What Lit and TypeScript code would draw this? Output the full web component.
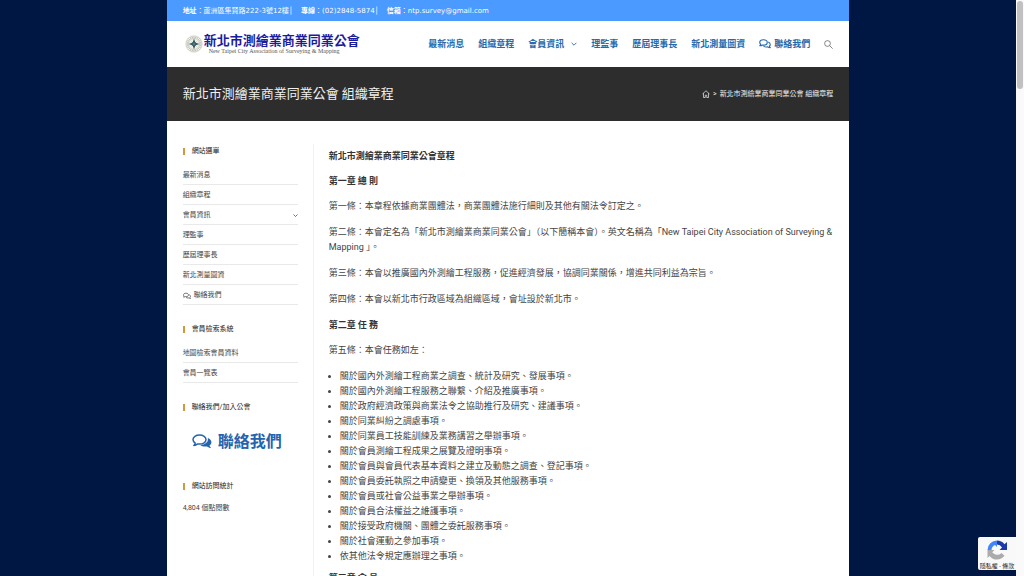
import { LitElement, html, css, svg } from "lit";
import { customElement, property } from "lit/decorators.js";

type MenuItem = { label: string; children?: boolean; chat?: boolean };

const MENU: MenuItem[] = [
  { label: "最新消息" },
  { label: "組織章程" },
  { label: "會員資訊", children: true },
  { label: "理監事" },
  { label: "歷屆理事長" },
  { label: "新北測量圖資" },
  { label: "聯絡我們", chat: true },
];

const DUTIES = [
  "關於國內外測繪工程商業之調查、統計及研究、發展事項。",
  "關於國內外測繪工程服務之聯繫、介紹及推廣事項。",
  "關於政府經濟政策與商業法令之協助推行及研究、建議事項。",
  "關於同業糾紛之調處事項。",
  "關於同業員工技能訓練及業務講習之舉辦事項。",
  "關於會員測繪工程成果之展覽及證明事項。",
  "關於會員與會員代表基本資料之建立及動態之調查、登記事項。",
  "關於會員委託執照之申請變更、換領及其他服務事項。",
  "關於會員或社會公益事業之舉辦事項。",
  "關於會員合法權益之維護事項。",
  "關於接受政府機關、團體之委託服務事項。",
  "關於社會運動之參加事項。",
  "依其他法令規定應辦理之事項。",
];

// Two outlined bubbles, used in the menus.
const chatOutline = html`<svg class="chat" viewBox="0 0 24 20" aria-hidden="true">
  <path d="M9 1.500c4.300 0 7.500 2.300 7.500 5.300S13.300 12.200 9 12.200c-.9 0-1.700-.1-2.400-.3-1.200.9-2.900 1.600-5 1.600.9-.9 1.500-1.900 1.700-3C2.200 9.500 1.500 8.200 1.500 6.800c0-3 3.200-5.300 7.500-5.300z" fill="none" stroke="currentColor" stroke-width="2.200" stroke-linejoin="round"/>
  <path d="M18.500 6.200c2.400.9 4 2.600 4 4.700 0 1.300-.6 2.500-1.700 3.500.2 1.100.8 2.100 1.700 3-2.100 0-3.800-.7-5-1.600-.7.200-1.500.3-2.400.3-2.500 0-4.700-.8-6-2" fill="none" stroke="currentColor" stroke-width="2.200" stroke-linejoin="round"/>
</svg>`;

// An outlined bubble with a filled one behind it, used in the contact link.
const chatSolid = html`<svg class="chat" viewBox="0 0 24 19" aria-hidden="true">
  <path d="M9 1.200c4.400 0 7.800 2.400 7.800 5.400S13.400 12 9 12c-.8 0-1.500-.1-2.200-.2-1.300 1-2.800 1.700-4.600 1.900.9-.8 1.500-1.700 1.700-2.900C2.200 9.800 1.200 8.300 1.200 6.600c0-3 3.400-5.400 7.800-5.400z" fill="none" stroke="currentColor" stroke-width="1.800" stroke-linejoin="round"/>
  <path d="M19 4.600c2.600 1 4.300 2.900 4.300 5.200 0 1.600-.9 3-2.400 4 .3 1.200 1 2 2 2.900-1.900-.1-3.500-.8-4.900-1.900-.7.100-1.300.2-2 .2-2.400 0-4.600-.7-6.100-1.900 5.100 0 9.200-2.800 9.200-6.500 0-.7 0-1.300-.1-2z" fill="currentColor"/>
</svg>`;

const chevron = html`<svg class="chevron" viewBox="0 0 10 10" aria-hidden="true">
  <path d="M1 3l4 4 4-4" fill="none" stroke="currentColor" stroke-width="1.500"/>
</svg>`;

@customElement("side-widget")
class SideWidget extends LitElement {
  @property() heading = "";

  static styles = css`
    :host { display: block; }
    .heading {
      margin: 0 0 10px;
      display: flex;
      align-items: center;
      gap: 7px;
      font-size: 7px;
      line-height: 14px;
      font-weight: 400;
      color: #222;
    }
    .heading::before { content: ""; width: 2px; height: 7px; background: #cf9a3c; }
  `;

  render() {
    return html`<h4 class="heading">${this.heading}</h4><slot></slot>`;
  }
}

@customElement("app-root")
class AppRoot extends LitElement {
  static styles = css`
    :host {
      display: flex;
      height: 100vh;
      overflow: hidden;
      position: relative;
      font-family: Roboto, "Noto Sans CJK TC", sans-serif;
      color: #444;
      font-size: 9px;
      line-height: 15px;
    }
    * { box-sizing: border-box; }
    a { color: inherit; text-decoration: none; }
    ul { margin: 0; padding: 0; list-style: none; }
    .backdrop { flex: 1; background: #001744; overflow: hidden; position: relative; }
    .page { width: 67.2%; margin: 0 auto; min-height: 100%; background: #fff; }
    .track { width: 8px; background: #fafafa; padding: 1px; }
    .thumb { height: 88px; border-radius: 3px; background: #c1c1c1; }

    .topbar {
      display: flex;
      gap: 8px;
      background: #4a9aff;
      color: #fff;
      padding: 4px 16px 2px;
      font-size: 7px;
      font-family: "DejaVu Sans", "Noto Sans CJK TC", sans-serif;
      white-space: nowrap;
    }
    .header {
      display: flex;
      align-items: center;
      justify-content: space-between;
      height: 46px;
      padding: 0 16px;
    }
    .logo { display: flex; align-items: center; gap: 1px; padding-left: 2px; }
    .emblem { width: 18px; height: 18px; }
    .names { display: flex; flex-direction: column; white-space: nowrap; }
    .name { font-size: 13px; line-height: 14px; font-weight: 700; color: #1b1ba0; }
    .english {
      font-family: "Liberation Serif", serif;
      font-size: 6px;
      line-height: 7px;
      padding-left: 5px;
      color: #555;
    }
    .nav { display: flex; align-items: center; gap: 14px; color: #2568ab; font-weight: 700; white-space: nowrap; }
    .nav ul { display: flex; gap: 14px; }
    .nav a { display: flex; align-items: center; gap: 3px; }
    .nav .chevron { margin-left: 4px; }
    .chat { width: 12px; height: 10px; flex: none; }
    .chevron { width: 6px; height: 6px; flex: none; }
    .search { border: 0; padding: 0; background: none; color: #555; display: flex; }
    .search svg { width: 9px; height: 9px; }

    .titlebar {
      display: flex;
      align-items: center;
      justify-content: space-between;
      height: 54px;
      padding: 0 16px;
      background: #2d2d2d;
      color: #f0f0f0;
    }
    .title { margin: 0; font-size: 13px; line-height: 18px; font-weight: 400; }
    .crumbs { display: flex; align-items: center; gap: 3px; font-size: 7px; }
    .home { width: 8px; height: 8px; display: block; }

    .content { display: flex; padding: 23px 16px 0; }
    .sidebar {
      flex: 0 0 131px;
      padding-right: 15px;
      border-right: 1px solid #f1f1f1;
      display: flex;
      flex-direction: column;
      gap: 17px;
      font-size: 7px;
    }
    .links li { height: 20px; border-bottom: 1px solid #e9e9e9; }
    .links li:first-child { height: 17px; }
    .links a { display: flex; align-items: flex-end; gap: 3px; height: 100%; padding-bottom: 1px; }
    .links .chat { width: 8px; height: 8px; margin-bottom: 3px; }
    .links .chevron { width: 5px; height: 5px; margin: 0 0 5px auto; }
    .contact {
      display: flex;
      align-items: center;
      gap: 6px;
      padding: 8px 0 10px 9px;
      color: #2464ae;
      font-size: 16px;
      line-height: 20px;
      font-weight: 700;
    }
    .contact .chat { width: 20px; height: 16px; }
    .count { margin: 0; line-height: 10px; }

    .article { flex: 1; min-width: 0; padding: 5px 0 0 15px; }
    .article p { margin: 0 0 11px; }
    .article h3 { margin: 0 0 10px; font-size: 9px; line-height: 15px; font-weight: 700; color: #333; }
    .duties { list-style: disc; padding-left: 11px; margin-bottom: 7px; }

    .badge {
      position: absolute;
      right: 0;
      bottom: 6px;
      width: 38px;
      height: 33px;
      border-radius: 2px 0 0 2px;
      background: #f9f9f9;
      display: flex;
      flex-direction: column;
      align-items: center;
      overflow: hidden;
      font-size: 6px;
      line-height: 8px;
      color: #222;
      white-space: nowrap;
    }
    .badge svg { width: 22px; height: 22px; margin: 2px 0 1px; flex: none; }
  `;

  private link(item: MenuItem) {
    return html`<li>
      <a href="#">${item.chat ? chatOutline : ""}<span>${item.label}</span>${item.children ? chevron : ""}</a>
    </li>`;
  }

  private emblem() {
    const ticks = Array.from({ length: 24 }, (_, i) => i * 15);
    return html`<svg class="emblem" viewBox="0 0 36 36" aria-hidden="true">
      <circle cx="18" cy="18" r="16.500" fill="#f3f3e8" stroke="#bdbdae" stroke-width="1" />
      ${ticks.map((a) => svg`<path d="M18 2.500v3.500" stroke="#a5a598" stroke-width="1.400" transform="rotate(${a} 18 18)"/>`)}
      <circle cx="18" cy="18" r="11" fill="#eef2ee" stroke="#aaa" />
      <path d="M18 7l2.500 8.500L29 18l-8.500 2.500L18 29l-2.500-8.500L7 18l8.500-2.500z" fill="#24484d" />
      <path d="M13 13l5 2.500 5-2.500-2.500 5 2.500 5-5-2.500-5 2.500 2.500-5z" fill="#52777a" />
    </svg>`;
  }

  render() {
    return html`
      <div class="backdrop">
        <div class="page">
          <div class="topbar">
            <span><b>地址</b>：蘆洲區集賢路222-3號12樓│</span>
            <span><b>專線</b>：(02)2848-5874│</span>
            <span><b>信箱</b>：ntp.survey@gmail.com</span>
          </div>
          <header class="header">
            <a class="logo" href="#">
              ${this.emblem()}
              <span class="names">
                <span class="name">新北市測繪業商業同業公會</span>
                <span class="english">New Taipei City Association of Surveying &amp; Mapping</span>
              </span>
            </a>
            <nav class="nav">
              <ul>${MENU.map((m) => this.link(m))}</ul>
              <button class="search" aria-label="搜尋">
                <svg viewBox="0 0 18 18"><circle cx="7" cy="7" r="5.800" fill="none" stroke="currentColor" stroke-width="1.400" /><path d="M11.300 11.300l6 6" stroke="currentColor" stroke-width="1.400" /></svg>
              </button>
            </nav>
          </header>
          <div class="titlebar">
            <h1 class="title">新北市測繪業商業同業公會 組織章程</h1>
            <nav class="crumbs">
              <a href="#" aria-label="首頁"><svg class="home" viewBox="0 0 16 16"><path d="M1 8l7-6.500L15 8M3 6.500V15h3.500v-4.500h3V15H13V6.500" fill="none" stroke="currentColor" stroke-width="1.400" /></svg></a>
              <span>&gt;</span>
              <a href="#">新北市測繪業商業同業公會 組織章程</a>
            </nav>
          </div>
          <div class="content">
            <aside class="sidebar">
              <side-widget heading="網站選單">
                <ul class="links">${MENU.map((m) => this.link(m))}</ul>
              </side-widget>
              <side-widget heading="會員檢索系統">
                <ul class="links">
                  <li><a href="#">地圖檢索會員資料</a></li>
                  <li><a href="#">會員一覽表</a></li>
                </ul>
              </side-widget>
              <side-widget heading="聯絡我們/加入公會">
                <a class="contact" href="#">${chatSolid}<span>聯絡我們</span></a>
              </side-widget>
              <side-widget heading="網站訪問統計">
                <p class="count">4,804 個點閱數</p>
              </side-widget>
            </aside>
            <main class="article">
              <h3>新北市測繪業商業同業公會章程</h3>
              <h3>第一章 總 則</h3>
              <p>第一條：本章程依據商業團體法，商業團體法施行細則及其他有關法令訂定之。</p>
              <p>第二條：本會定名為「新北市測繪業商業同業公會」（以下簡稱本會）。英文名稱為「New Taipei City Association of Surveying &amp; Mapping 」。</p>
              <p>第三條：本會以推廣國內外測繪工程服務，促進經濟發展，協調同業關係，增進共同利益為宗旨。</p>
              <p>第四條：本會以新北市行政區域為組織區域，會址設於新北市。</p>
              <h3>第二章 任 務</h3>
              <p>第五條：本會任務如左：</p>
              <ul class="duties">${DUTIES.map((d) => html`<li>${d}</li>`)}</ul>
              <h3>第三章 會 員</h3>
            </main>
          </div>
        </div>
        <div class="badge">
          <svg viewBox="0 0 44 44" aria-hidden="true">
            <path d="M22 3a19 19 0 0 1 15 7.500L42 6v16H27l5-5a12 12 0 0 0-10-6z" fill="#1c3aa9" />
            <path d="M3 22A19 19 0 0 1 22 3v13l-4-4a12 12 0 0 0-7 10z" fill="#4285f4" />
            <path d="M3 22h14l-4.500 4.500A12 12 0 0 0 31 28l6 5.500A19 19 0 0 1 7 34l-4 4z" fill="#ababab" />
          </svg>
          <span>隱私權 - 條款</span>
        </div>
      </div>
      <div class="track"><div class="thumb"></div></div>
    `;
  }
}
